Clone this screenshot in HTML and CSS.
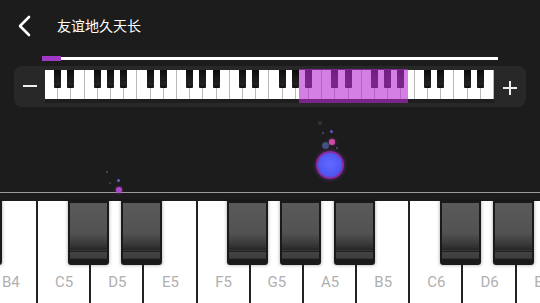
FILE: index.html
```html
<!DOCTYPE html>
<html lang="zh">
<head>
<meta charset="UTF-8" />
<meta name="viewport" content="width=device-width, initial-scale=1" />
<title>友谊地久天长</title>
<link rel="stylesheet" href="styles.css">
</head>
<body>

<div class="app">
  <div class="topbar">
    <svg class="back" width="16" height="22" viewBox="0 0 16 22">
      <path d="M12 2 L3 11 L12 20" fill="none" stroke="#fff" stroke-width="2.6" stroke-linecap="round" stroke-linejoin="round"/>
    </svg>
    <div class="title">友谊地久天长</div>
  </div>

  <div class="progress">
    <div class="progress-done"></div>
    <div class="progress-rest"></div>
  </div>

  <div class="mini">
    <div class="mini-btn minus"></div>
    <div class="mini-keys">
      <div class="mk b"></div><div class="mk b"></div><div class="mk"></div><div class="mk b"></div><div class="mk b"></div><div class="mk b"></div><div class="mk"></div>
      <div class="mk b"></div><div class="mk b"></div><div class="mk"></div><div class="mk b"></div><div class="mk b"></div><div class="mk b"></div><div class="mk"></div>
      <div class="mk b"></div><div class="mk b"></div><div class="mk"></div><div class="mk b"></div><div class="mk b"></div><div class="mk b"></div><div class="mk"></div>
      <div class="mk b"></div><div class="mk b"></div><div class="mk"></div><div class="mk b"></div><div class="mk b"></div><div class="mk b"></div><div class="mk"></div>
      <div class="mk b"></div><div class="mk b"></div><div class="mk"></div><div class="mk b"></div><div class="mk b"></div><div class="mk"></div>
      <div class="mini-view"></div>
    </div>
    <div class="mini-btn plus"></div>
  </div>

  <div class="stage">
    <div class="dot" style="left:318px;top:14px;width:4px;height:4px;background:#333;"></div>
    <div class="dot" style="left:330px;top:23px;width:3px;height:3px;background:#6a52c8;"></div>
    <div class="dot" style="left:322px;top:25px;width:2px;height:2px;background:#556;"></div>
    <div class="dot glow" style="left:329px;top:32px;width:6px;height:6px;background:#d04aa8;"></div>
    <div class="dot" style="left:322px;top:35px;width:7px;height:7px;background:#44507e;"></div>
    <div class="dot" style="left:336px;top:40px;width:2px;height:2px;background:#557;"></div>
    <div class="dot" style="left:106px;top:64px;width:2px;height:2px;background:#555;"></div>
    <div class="dot" style="left:109px;top:75px;width:2px;height:2px;background:#444;"></div>
    <div class="dot" style="left:117px;top:72px;width:3px;height:3px;background:#5a68c8;"></div>
    <div class="dot glow" style="left:116px;top:80px;width:6px;height:6px;background:#a848c8;"></div>
    <div class="ball"></div>
  </div>

  <div class="keyboard">
    <div class="keys">
      <div class="key b"></div>
      <div class="key"><span>B4</span></div>
      <div class="key b"><span>C5</span></div>
      <div class="key b"><span>D5</span></div>
      <div class="key"><span>E5</span></div>
      <div class="key b"><span>F5</span></div>
      <div class="key b"><span>G5</span></div>
      <div class="key b"><span>A5</span></div>
      <div class="key"><span>B5</span></div>
      <div class="key b"><span>C6</span></div>
      <div class="key b"><span>D6</span></div>
      <div class="key"><span>E6</span></div>
    </div>
  </div>
</div>

</body>
</html>
```

FILE: styles.css
```css
/* Reset */
* {
  margin: 0; padding: 0; box-sizing: border-box;
}
html, body {
  width: 540px;
  height: 303px;
  background: #1c1c1c;
  font-family: Roboto, 'Noto Sans', sans-serif;
  color: white;
  overflow: hidden;
}
.app {
  height: 303px;
  display: flex;
  flex-direction: column;
}

/* top bar */
.topbar {
  height: 50px;
  display: flex;
  align-items: center;
  padding-left: 17px;
}
.back {
  display: block;
  margin-top: 1px;
}
.title {
  margin-left: 24px;
  font-family: 'Noto Sans CJK SC', sans-serif;
  font-size: 14px;
  line-height: 20px;
}

/* song progress */
.progress {
  height: 5px;
  margin: 6px 42px 0;
  display: flex;
  align-items: center;
}
.progress-done {
  width: 19px;
  height: 5px;
  background: #a03ac6;
}
.progress-rest {
  flex: 1;
  height: 3px;
  background: #fff;
}

/* mini keyboard */
.mini {
  height: 41px;
  margin: 5px 14px 0;
  background: #282828;
  border-radius: 8px;
  display: flex;
}
.mini-btn {
  width: 31px;
  position: relative;
}
.mini-btn::before,
.plus::after {
  content: '';
  position: absolute;
  left: 9px;
  top: 19px;
  width: 14px;
  height: 2px;
  background: #eee;
}
.plus {
  width: 32px;
}
.plus::before {
  left: 9px;
  top: 21px;
}
.plus::after {
  left: 15px;
  top: 15px;
  width: 2px;
  height: 14px;
}
.mini-keys {
  flex: 1;
  position: relative;
  display: flex;
  margin-top: 4px;
  height: 33px;
  background: #1e1e1e;
}
.mk {
  flex: 1;
  height: 29px;
  background: #fff;
  border-right: 1px solid #b8b8b8;
  position: relative;
}
.mk.b::after {
  content: '';
  position: absolute;
  z-index: 1;
  right: -4px;
  top: 0;
  width: 7px;
  height: 18px;
  background: linear-gradient(#0c0c0c, #222 80%, #111);
  border-radius: 0 0 1px 1px;
}
.mini-view {
  position: absolute;
  z-index: 2;
  left: 254px;
  top: -1px;
  width: 109px;
  height: 34px;
  background: rgba(182, 42, 208, 0.6);
}

/* falling notes area */
.stage {
  flex: 1;
  position: relative;
}
.dot {
  position: absolute;
  border-radius: 50%;
}
.glow {
  box-shadow: 0 0 3px rgba(200, 70, 200, 0.7);
}
.ball {
  position: absolute;
  left: 316px;
  top: 44px;
  width: 28px;
  height: 28px;
  border-radius: 50%;
  border: 2px solid #8a2ca6;
  background: radial-gradient(circle at 50% 45%, #6068ff, #4e56f0 70%);
  box-shadow: 0 0 4px rgba(150, 60, 200, 0.6);
}

/* big keyboard */
.keyboard {
  height: 111px;
  border-top: 1px solid #9a9a9a;
  padding-top: 8px;
  overflow: hidden;
}
.keys {
  display: flex;
  margin-left: -68.4px;
  height: 102px;
}
.key {
  flex: 0 0 53.2px;
  position: relative;
  background: #fff;
  border-right: 2px solid #222;
  display: flex;
  align-items: flex-end;
  justify-content: center;
  padding-bottom: 12px;
}
.key span {
  font-size: 15px;
  line-height: 18px;
  color: #b0b0b0;
  margin-right: -1px;
}
.key.b::after {
  content: '';
  position: absolute;
  z-index: 1;
  right: -19.5px;
  top: 0;
  width: 37px;
  height: 60px;
  border: 2px solid #1a1a1a;
  border-radius: 0 0 3px 3px;
  background:
    linear-gradient(#1e1e1e, #1e1e1e) 0 48px / 100% 1px no-repeat,
    linear-gradient(#5a5a5a, #525252 50%, #3a3a3a 68%, #262626 78%, #454545 80%, #3c3c3c 92%, #1a1a1a 94%);
  box-shadow: 0 0 3px 1px rgba(0, 0, 0, 0.22);
}
```
